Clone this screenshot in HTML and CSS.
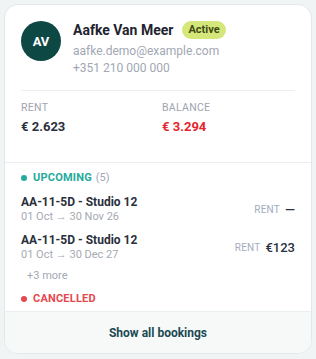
FILE: index.html
```html
<!DOCTYPE html>
<html>
<head>
<meta charset="utf-8">
<link rel="stylesheet" href="styles.css">
</head>
<body>
<div class="card">
  <div class="top">
    <div class="header">
      <div class="avatar">AV</div>
      <div class="info">
        <div class="name-row">
          <span class="name">Aafke Van Meer</span>
          <span class="badge">Active</span>
        </div>
        <div class="meta">aafke.demo@example.com</div>
        <div class="meta">+351 210 000 000</div>
      </div>
    </div>
    <div class="stats">
      <div class="stat">
        <div class="stat-label">RENT</div>
        <div class="stat-value">€ 2.623</div>
      </div>
      <div class="stat">
        <div class="stat-label">BALANCE</div>
        <div class="stat-value neg">€ 3.294</div>
      </div>
    </div>
  </div>
  <div class="list">
    <div class="group-title upcoming"><span class="dot"></span>UPCOMING <span class="count">(5)</span></div>
    <div class="booking">
      <div class="b-main">
        <div class="b-title">AA-11-5D - Studio 12</div>
        <div class="b-date">01 Oct → 30 Nov 26</div>
      </div>
      <div class="b-rent"><span class="b-label">RENT</span><span class="b-val">—</span></div>
    </div>
    <div class="booking">
      <div class="b-main">
        <div class="b-title">AA-11-5D - Studio 12</div>
        <div class="b-date">01 Oct → 30 Dec 27</div>
      </div>
      <div class="b-rent"><span class="b-label">RENT</span><span class="b-val">€123</span></div>
    </div>
    <div class="more">+3 more</div>
    <div class="group-title cancelled"><span class="dot"></span>CANCELLED</div>
  </div>
  <div class="footer">Show all bookings</div>
</div>
</body>
</html>
```

FILE: styles.css
```css
* { box-sizing: border-box; }
html, body { margin: 0; padding: 0; }
body {
  background: #f1f4f4;
  padding: 4px;
  font-family: Roboto, "Noto Sans", sans-serif;
  color: #252b37;
}
.card {
  width: 308px;
  height: 350px;
  background: #fff;
  border: 1px solid #e3e8ea;
  border-radius: 14px;
  overflow: hidden;
  display: flex;
  flex-direction: column;
}
.top {
  padding: 16px 16px 0;
  border-bottom: 1px solid #e9eef0;
}
.header {
  display: flex;
  gap: 12px;
  padding-bottom: 13px;
  border-bottom: 1px solid #eceff2;
}
.avatar {
  width: 40px;
  height: 40px;
  border-radius: 50%;
  background: #0e4845;
  color: #fff;
  font-weight: 700;
  font-size: 13px;
  display: flex;
  align-items: center;
  justify-content: center;
  flex-shrink: 0;
}
.info { display: flex; flex-direction: column; }
.name-row {
  display: flex;
  align-items: center;
  gap: 9px;
  height: 18px;
  margin-bottom: 4px;
}
.name { font-size: 14px; font-weight: 700; color: #1f2430; }
.badge {
  background: #d5e77a;
  color: #3e4a12;
  font-size: 11px;
  font-weight: 700;
  height: 18px;
  line-height: 18px;
  padding: 0 6px;
  border-radius: 9px;
}
.meta { font-size: 12px; line-height: 17px; color: #a1a7b3; }
.stats {
  display: grid;
  grid-template-columns: 1fr 1fr;
  gap: 8px;
  padding: 10px 0 26px;
}
.stat-label { font-size: 10.5px; line-height: 14px; color: #9ea4b0; letter-spacing: 0.3px; }
.stat-value { font-size: 13px; line-height: 18px; font-weight: 700; margin-top: 3px; color: #2a303c; }
.stat-value.neg { color: #e5252d; }
.list {
  flex: 1;
  padding: 8px 16px 0;
  overflow: hidden;
}
.group-title {
  display: flex;
  align-items: center;
  font-size: 11px;
  line-height: 14px;
  font-weight: 700;
  letter-spacing: 0.2px;
}
.dot { width: 6px; height: 6px; border-radius: 50%; margin-right: 6px; }
.upcoming { color: #23aa9c; }
.upcoming .dot { background: #23aa9c; }
.count { color: #a3a9b3; font-weight: 400; margin-left: 4px; letter-spacing: 0; }
.cancelled { color: #e5484d; margin-top: 9px; }
.cancelled .dot { background: #e5484d; }
.booking {
  display: flex;
  align-items: center;
  justify-content: space-between;
  margin-top: 9px;
}
.booking + .booking { margin-top: 8px; }
.b-title { font-size: 12px; line-height: 16px; font-weight: 700; color: #2a303c; }
.b-date { font-size: 11px; line-height: 14px; color: #a5aab3; }
.b-rent { display: flex; align-items: center; gap: 5px; }
.b-label { font-size: 10px; color: #a3abbd; letter-spacing: 0.2px; }
.b-val { font-size: 13px; font-weight: 500; color: #2a3142; }
.more { font-size: 11px; line-height: 14px; color: #a3a9b3; padding-left: 6px; margin-top: 7px; }
.footer {
  height: 42px;
  flex-shrink: 0;
  background: #f7f9f9;
  border-top: 1px solid #e9eef0;
  display: flex;
  align-items: center;
  justify-content: center;
  font-size: 12px;
  font-weight: 700;
  color: #1c4a52;
}
```
